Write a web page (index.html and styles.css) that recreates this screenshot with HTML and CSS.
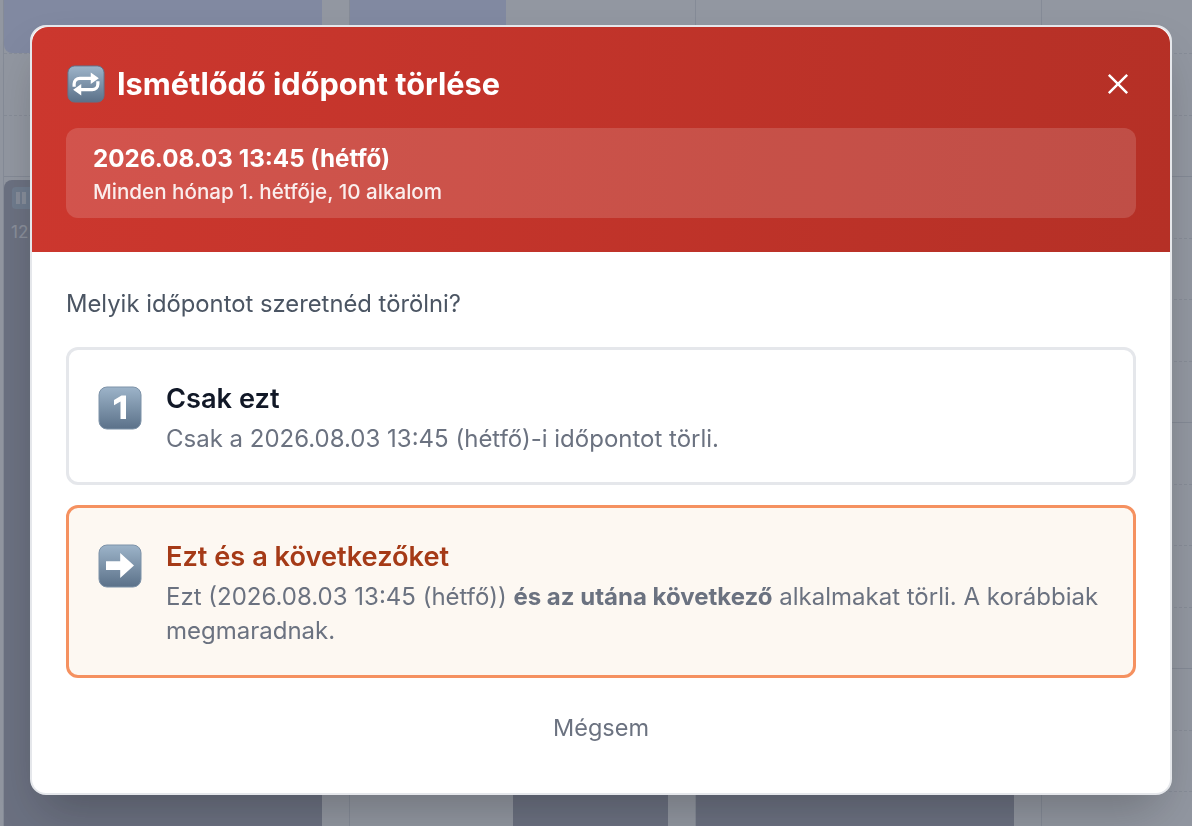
FILE: index.html
```html
<!DOCTYPE html>
<html lang="hu">
<head>
<meta charset="utf-8">
<title>Ismétlődő időpont törlése</title>
<link rel="stylesheet" href="styles.css">
</head>
<body>
<div class="calendar">
  <div class="rows">
    <div class="row"></div><div class="row"></div><div class="row row-hour"></div>
    <div class="row"></div><div class="row"></div><div class="row"></div><div class="row row-hour"></div>
    <div class="row"></div><div class="row"></div><div class="row"></div><div class="row row-hour"></div>
    <div class="row"></div><div class="row"></div><div class="row"></div>
  </div>
  <div class="col">
    <div class="event event-blue ev-a-top"></div>
    <div class="event event-dark ev-a-long"><span class="ev-badge"><i></i><i></i></span><span class="ev-time">12</span></div>
  </div>
  <div class="col">
    <div class="event event-blue ev-b-top"></div>
    <div class="event event-dark ev-b-foot"></div>
  </div>
  <div class="col"><div class="event event-dark ev-c-foot"></div></div>
  <div class="col"></div>
</div>
<div class="overlay">
  <div class="modal">
    <header class="modal-head">
      <div class="title-row">
        <h2 class="title">
          <svg class="emoji em-title" viewBox="0 0 40 40"><defs><linearGradient id="g1" x1="0" y1="0" x2="0" y2="1"><stop offset="0" stop-color="#9db4c9"/><stop offset="1" stop-color="#5b7189"/></linearGradient></defs><rect x="1" y="1" width="38" height="38" rx="7" fill="url(#g1)" stroke="#5f748b" stroke-width="1"/><path d="M7.500 23v-3a6 6 0 0 1 6-6h12M32.500 17v3a6 6 0 0 1-6 6h-12" fill="none" stroke="#fff" stroke-width="3.400"/><path d="M25 8l8.500 6-8.500 6zM15 20l-8.500 6 8.500 6z" fill="#fff"/></svg>
          <span>Ismétlődő időpont törlése</span>
        </h2>
        <button class="close" aria-label="Bezárás"><svg viewBox="0 0 24 24"><path d="M2 2l20 20M22 2L2 22" stroke="#fff" stroke-width="2.700" fill="none"/></svg></button>
      </div>
      <div class="info">
        <div class="info-date">2026.08.03 13:45 (hétfő)</div>
        <div class="info-sub">Minden hónap 1. hétfője, 10 alkalom</div>
      </div>
    </header>
    <div class="modal-body">
      <p class="question">Melyik időpontot szeretnéd törölni?</p>
      <button class="option">
        <svg class="emoji" viewBox="0 0 44 44"><defs><linearGradient id="g2" x1="0" y1="0" x2="0" y2="1"><stop offset="0" stop-color="#9db4c9"/><stop offset="1" stop-color="#5b7189"/></linearGradient></defs><rect x="1" y="1" width="42" height="42" rx="8" fill="url(#g2)" stroke="#7d92a8" stroke-width="1"/><path d="M28 33h-5.500V15.500l-6.500 3.800v-5.300l7.500-4.500H28z" fill="#fff"/></svg>
        <span class="opt-text">
          <span class="opt-title">Csak ezt</span>
          <span class="opt-desc">Csak a 2026.08.03 13:45 (hétfő)-i időpontot törli.</span>
        </span>
      </button>
      <button class="option option-next">
        <svg class="emoji" viewBox="0 0 44 44"><defs><linearGradient id="g3" x1="0" y1="0" x2="0" y2="1"><stop offset="0" stop-color="#9db4c9"/><stop offset="1" stop-color="#5b7189"/></linearGradient></defs><rect x="1" y="1" width="42" height="42" rx="8" fill="url(#g3)" stroke="#7d92a8" stroke-width="1"/><path d="M8 17.300h14.200V9L36 21.500 22.200 34v-8H8z" fill="#fff"/></svg>
        <span class="opt-text">
          <span class="opt-title">Ezt és a következőket</span>
          <span class="opt-desc">Ezt (2026.08.03 13:45 (hétfő)) <strong>és az utána következő</strong> alkalmakat törli. A korábbiak megmaradnak.</span>
        </span>
      </button>
      <button class="cancel">Mégsem</button>
    </div>
  </div>
</div>
</body>
</html>
```

FILE: styles.css
```css
* { box-sizing: border-box; }
html, body { margin: 0; height: 100%; overflow: hidden; }
body { font-family: Inter, "Liberation Sans", sans-serif; background: #fff; }

.calendar {
  position: relative;
  height: 826px;
  overflow: hidden;
  padding-left: 3px;
  display: grid;
  grid-template-columns: repeat(4, 346px);
  background: #fff;
}
.rows { position: absolute; top: -7.500px; left: 4px; right: 0; }
.row { height: 61.500px; border-bottom: 1px dashed #e9eaed; }
.row-hour { border-bottom: 1px solid #e2e4e8; }
.col { position: relative; border-left: 1px solid #e5e7eb; }
.event { position: absolute; border-radius: 8px; }
.event-blue { background: #dde3ff; }
.event-dark { background: #b2b3bf; }
.ev-a-top { top: -10px; height: 63px; left: 0; width: 318px; }
.ev-a-long { top: 180px; bottom: -20px; left: 0; width: 318px; }
.ev-b-top { top: -10px; height: 63px; left: 0; width: 156px; }
.ev-b-foot { top: 700px; bottom: -20px; left: 163px; width: 155px; }
.ev-c-foot { top: 700px; bottom: -20px; left: 0; width: 318px; }
.ev-badge { position: absolute; left: 8px; top: 7px; width: 22px; height: 22px; padding: 5px 4px; display: flex; gap: 2px; border-radius: 4px; background: #b9c8d8; }
.ev-badge i { width: 4px; height: 12px; background: #e8ebf0; }
.ev-time { position: absolute; left: 7px; top: 41px; font-size: 17px; line-height: 22px; color: #eeeff2; }

.overlay {
  position: fixed;
  inset: 0;
  padding: 25px 0 0 30px;
  background: rgba(37, 47, 67, 0.5);
  display: flex;
  align-items: flex-start;
  justify-content: flex-start;
}
.modal {
  width: 1142px;
  height: 770px;
  background: #fff;
  border: 2px solid #e5e7eb;
  border-radius: 16px;
  overflow: hidden;
  box-shadow: 0 25px 50px -12px rgba(0, 0, 0, 0.25);
}

.modal-head {
  height: 225px;
  padding: 34px 34px 0;
  border-radius: 16px 16px 0 0;
  background: linear-gradient(95deg, #cc372e, #b53026);
  color: #fff;
}
.title-row { display: flex; align-items: center; justify-content: space-between; height: 46px; }
.title { margin: 0; display: flex; align-items: center; gap: 12px; font-size: 30.700px; line-height: 46px; font-weight: 700; }
.emoji { flex: none; display: block; width: 44px; height: 44px; margin-top: 3px; }
.title .em-title { width: 38px; height: 38px; margin: 0 0 0 1px; }
.close { width: 26px; height: 26px; padding: 2px; margin-right: 5px; border: 0; background: none; }
.close svg { display: block; width: 22px; height: 22px; }

.info {
  margin-top: 21px;
  height: 90px;
  padding: 17px 27px 0;
  border-radius: 12px;
  background: rgba(255, 255, 255, 0.15);
}
.info-date { font-size: 24.200px; line-height: 28px; font-weight: 700; }
.info-sub { margin-top: 6px; font-size: 20.600px; line-height: 26px; font-weight: 500; opacity: 0.9; }

.modal-body { padding: 36px 34px 0; }
.question { margin: 0 0 27px; font-size: 23.800px; line-height: 32px; color: #4b5563; }

.option {
  display: flex;
  width: 100%;
  gap: 24px;
  align-items: flex-start;
  text-align: left;
  font-family: inherit;
  padding: 33px 29px 26px;
  border: 3px solid #e5e7eb;
  border-radius: 12px;
  background: #fff;
  margin-bottom: 20px;
}
.option-next { background: #fdf8f2; border-color: #f59160; }
.opt-text { display: block; }
.opt-title { display: block; font-size: 27.200px; line-height: 32px; font-weight: 600; color: #111827; }
.opt-desc { display: block; margin-top: 6.500px; font-size: 24px; line-height: 34.500px; color: #6b7280; }
.opt-desc strong { font-weight: 700; }
.option-next .opt-title { color: #a53a17; }

.cancel {
  display: block;
  margin: 34px auto 0;
  padding: 0;
  border: 0;
  background: none;
  font-family: inherit;
  font-size: 23.500px;
  line-height: 32px;
  color: #6b7280;
}
```
